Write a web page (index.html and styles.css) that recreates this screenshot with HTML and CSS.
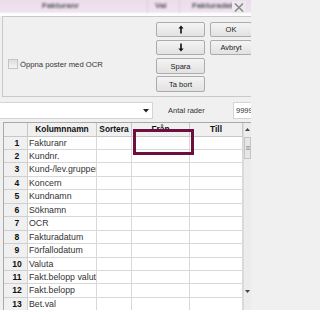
FILE: index.html
```html
<!DOCTYPE html>
<html>
<head>
<meta charset="utf-8">
<link rel="stylesheet" href="styles.css">
</head>
<body>
<div class="page">
  <div class="titlebar">
    <span class="tb-col tb-first">Fakturanr</span>
    <span class="tb-col tb-val">Val</span>
    <span class="tb-col tb-last">Fakturadatum</span>
    <span class="tb-close">
      <svg width="12" height="11" viewBox="0 0 12 11"><path d="M2 1.5 L10 9.5 M10 1.5 L2 9.5" stroke="#8a8a8a" stroke-width="1.6" fill="none"/></svg>
    </span>
  </div>
  <div class="panel">
    <label class="check">
      <span class="box"></span>
      <span>Öppna poster med OCR</span>
    </label>
    <div class="buttons">
      <button class="btn">
        <svg width="6" height="9" viewBox="0 0 6 9"><path d="M3 0.5 L5.6 3.6 H3.8 V8.5 H2.2 V3.6 H0.4 Z" fill="#111"/></svg>
      </button>
      <button class="btn">OK</button>
      <button class="btn">
        <svg width="6" height="9" viewBox="0 0 6 9"><path d="M3 8.5 L5.6 5.4 H3.8 V0.5 H2.2 V5.4 H0.4 Z" fill="#111"/></svg>
      </button>
      <button class="btn">Avbryt</button>
      <button class="btn">Spara</button>
      <span></span>
      <button class="btn">Ta bort</button>
    </div>
  </div>
  <div class="combo-row">
    <div class="combo">
      <svg class="arrow" width="6" height="4" viewBox="0 0 6 4"><path d="M0 0 H6 L3 3.5 Z" fill="#222"/></svg>
    </div>
    <span class="antal">Antal rader</span>
    <div class="num">9999</div>
  </div>
  <div class="gridwrap">
    <div class="grid">
      <div class="h corner"></div>
      <div class="h">Kolumnnamn</div>
      <div class="h">Sortera</div>
      <div class="h">Från</div>
      <div class="h">Till</div>

      <div class="rh">1</div><div class="c">Fakturanr</div><div class="c"></div><div class="c"></div><div class="c"></div>
      <div class="rh">2</div><div class="c">Kundnr.</div><div class="c"></div><div class="c"></div><div class="c"></div>
      <div class="rh">3</div><div class="c">Kund-/lev.grupper</div><div class="c"></div><div class="c"></div><div class="c"></div>
      <div class="rh">4</div><div class="c">Koncern</div><div class="c"></div><div class="c"></div><div class="c"></div>
      <div class="rh">5</div><div class="c">Kundnamn</div><div class="c"></div><div class="c"></div><div class="c"></div>
      <div class="rh">6</div><div class="c">Söknamn</div><div class="c"></div><div class="c"></div><div class="c"></div>
      <div class="rh">7</div><div class="c">OCR</div><div class="c"></div><div class="c"></div><div class="c"></div>
      <div class="rh">8</div><div class="c">Fakturadatum</div><div class="c"></div><div class="c"></div><div class="c"></div>
      <div class="rh">9</div><div class="c">Förfallodatum</div><div class="c"></div><div class="c"></div><div class="c"></div>
      <div class="rh">10</div><div class="c">Valuta</div><div class="c"></div><div class="c"></div><div class="c"></div>
      <div class="rh">11</div><div class="c">Fakt.belopp valuta</div><div class="c"></div><div class="c"></div><div class="c"></div>
      <div class="rh">12</div><div class="c">Fakt.belopp</div><div class="c"></div><div class="c"></div><div class="c"></div>
      <div class="rh">13</div><div class="c">Bet.val</div><div class="c"></div><div class="c"></div><div class="c"></div>
    </div>
    <div class="scrollbar">
      <svg class="sb-up" width="5" height="3" viewBox="0 0 5 3"><path d="M0 3 L2.5 0 L5 3 Z" fill="#444"/></svg>
      <div class="thumb">
        <svg width="4" height="4" viewBox="0 0 4 4"><path d="M0 0.5 H4 M0 2 H4 M0 3.5 H4" stroke="#999" stroke-width="0.8"/></svg>
      </div>
      <div class="track"></div>
      <svg class="sb-down" width="5" height="3" viewBox="0 0 5 3"><path d="M0 0 L5 0 L2.5 3 Z" fill="#444"/></svg>
    </div>
    <div class="highlight"></div>
  </div>
</div>
</body>
</html>
```

FILE: styles.css
```css
* { box-sizing: border-box; }
html, body { margin: 0; padding: 0; }
body {
  width: 251px;
  height: 310px;
  overflow: hidden;
  background: #f0f0f0;
  font-family: "Liberation Sans", Arial, sans-serif;
  font-size: 8px;
  color: #222;
}
.page {
  width: 251px;
  height: 310px;
  overflow: hidden;
  display: flex;
  flex-direction: column;
  background: #f0f0f0;
}
.titlebar {
  flex: 0 0 auto;
  height: 16px;
  position: relative;
  background: linear-gradient(to bottom, #ecdcec 0, #efe3f0 12px, #fbf8fb 13px, #ffffff 16px);
  display: flex;
  align-items: flex-start;
  color: #555;
}
.tb-col {
  height: 13px;
  line-height: 11px;
  font-size: 8px;
  font-weight: bold;
  filter: blur(1.3px);
  color: #555;
}
.tb-first { width: 148px; padding-left: 42px; border-right: 1px solid #dccbdd; }
.tb-val { width: 32px; padding-left: 7px; border-right: 1px solid #dccbdd; }
.tb-last { padding-left: 12px; }
.tb-close {
  position: absolute;
  left: 232px;
  top: 1px;
  width: 14px;
  height: 12px;
  display: flex;
  align-items: center;
  justify-content: center;
  background: #ede7ee;
}
.panel {
  flex: 0 0 auto;
  height: 81px;
  margin-left: 2px;
  border: 1px solid #c9c9c9;
  border-right: none;
  background: #f0f0f0;
  display: flex;
  justify-content: space-between;
  padding: 5px 0 0 5px;
}
.check {
  display: flex;
  align-items: center;
  gap: 2px;
  align-self: flex-start;
  margin-top: 37px;
  font-size: 7.7px;
  color: #333;
}
.box {
  width: 10px;
  height: 10px;
  border: 1px solid #c4c4c4;
  background: linear-gradient(#dedede, #f4f4f4);
}
.buttons {
  display: grid;
  grid-template-columns: 49px 42px;
  grid-auto-rows: 15px;
  column-gap: 5px;
  row-gap: 3px;
  margin-right: -1px;
}
.btn {
  margin: 0;
  padding: 0;
  font-family: "Liberation Sans", Arial, sans-serif;
  font-size: 7.5px;
  color: #222;
  border: 1px solid #acacac;
  border-radius: 2px;
  background: linear-gradient(#f4f4f4, #e2e2e2);
  display: flex;
  align-items: center;
  justify-content: center;
}
.buttons .btn:nth-child(5), .buttons .btn:nth-child(7) { height: 16px; }
.combo-row {
  flex: 0 0 auto;
  height: 25px;
  display: flex;
  align-items: center;
  padding-top: 1px;
}
.combo {
  width: 153px;
  height: 17px;
  background: #fff;
  border: 1px solid #d4d4d4;
  border-left: none;
  position: relative;
}
.arrow { position: absolute; left: 143px; top: 6px; }
.antal {
  margin-left: 15px;
  width: 65px;
  color: #333;
  font-size: 7.5px;
}
.num {
  flex: 1;
  height: 17px;
  background: #fff;
  border: 1px solid #d4d4d4;
  border-right: none;
  padding-left: 2px;
  line-height: 15px;
  font-size: 7.5px;
  overflow: hidden;
  white-space: nowrap;
  color: #333;
}
.gridwrap {
  flex: 1;
  margin-left: 3px;
  border-left: 1px solid #a9a9a9;
  border-top: 1px solid #a9a9a9;
  display: flex;
  position: relative;
  background: #fff;
}
.grid {
  display: grid;
  grid-template-columns: 24px 69px 35px 58px 53px;
  grid-template-rows: 13.6px;
  grid-auto-rows: 13.45px;
  align-content: start;
}
.grid > div {
  border-right: 1px solid #d8d8d8;
  border-bottom: 1px solid #d8d8d8;
  overflow: hidden;
  white-space: nowrap;
  line-height: 12.4px;
}
.h {
  background: #f0f0f0;
  font-weight: bold;
  font-size: 8.4px;
  text-align: center;
  color: #111;
  border-color: #c8c8c8 !important;
}
.rh {
  background: #f0f0f0;
  font-weight: bold;
  font-size: 8.6px;
  text-align: center;
  padding-left: 3px;
  color: #111;
  border-color: #cfcfcf !important;
}
.c {
  padding-left: 1px;
  font-size: 8.8px;
  color: #333;
}
.scrollbar {
  width: 8px;
  display: flex;
  flex-direction: column;
  align-items: center;
  background: #ececec;
  border-left: 1px solid #dcdcdc;
}
.sb-up { margin-top: 5px; }
.thumb {
  margin-top: 6px;
  width: 7px;
  height: 22px;
  border: 1px solid #c4c4c4;
  background: #e6e6e6;
  display: flex;
  align-items: center;
  justify-content: center;
}
.track { flex: 1; }
.sb-down { margin-bottom: 18px; }
.highlight {
  position: absolute;
  left: 129px;
  top: 6px;
  width: 61px;
  height: 26px;
  border: 3px solid #6d1040;
  pointer-events: none;
}
```
